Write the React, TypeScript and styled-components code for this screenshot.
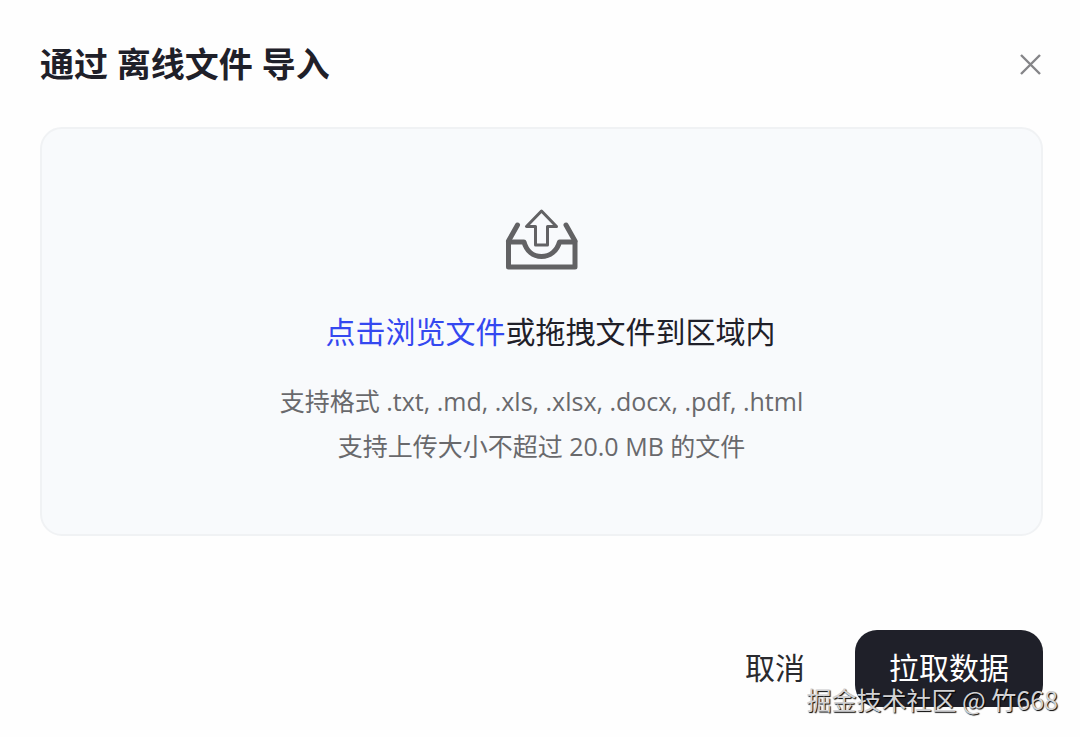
import React, { useRef } from "react";
import styled, { createGlobalStyle } from "styled-components";

const GlobalStyle = createGlobalStyle`
  *, *::before, *::after { box-sizing: border-box; }
  body {
    margin: 0;
    background: #fefefe;
    color: #1f2029;
    font-family: "Open Sans", "Noto Sans CJK SC", sans-serif;
  }
  button { font-family: inherit; cursor: pointer; }
`;

const Dialog = styled.main`
  position: relative;
  display: flex;
  flex-direction: column;
  padding: 40px 37px 30px 40px;
`;

const Header = styled.header`
  display: flex;
  align-items: center;
  justify-content: space-between;
  height: 48px;
`;

const Title = styled.h1`
  margin: 0;
  font-size: 34px;
  line-height: 48px;
  font-weight: 700;
`;

const CloseButton = styled.button`
  display: flex;
  padding: 0;
  border: 0;
  background: none;
  color: #858588;
`;

const DropZone = styled.section`
  display: flex;
  flex-direction: column;
  align-items: center;
  margin-top: 39px;
  padding: 80px 24px 65px;
  border: 2px solid #f0f2f4;
  border-radius: 22px;
  background: #f8fafc;
`;

const Prompt = styled.p`
  margin: 37px 0 23px;
  padding-left: 18px;
  font-size: 30px;
  line-height: 48px;
`;

const BrowseButton = styled.button`
  padding: 0;
  border: 0;
  background: none;
  color: #3448f0;
  font-size: inherit;
  line-height: inherit;
`;

const Hint = styled.p`
  margin: 0;
  color: #69696c;
  font-size: 25px;
  line-height: 45px;
  text-align: center;
`;

const Footer = styled.footer`
  display: flex;
  justify-content: flex-end;
  gap: 16px;
  margin-top: 94px;
`;

const ActionButton = styled.button<{ $primary?: boolean }>`
  height: 77px;
  padding: 0 34px 2px;
  border: 0;
  border-radius: 22px;
  background: ${(p) => (p.$primary ? "#1f2029" : "transparent")};
  color: ${(p) => (p.$primary ? "#ffffff" : "#2a2a2e")};
  font-size: 30px;
  line-height: 48px;
`;

const Watermark = styled.span`
  position: absolute;
  right: 22px;
  bottom: 20px;
  color: #d2d2d4;
  font-family: "Noto Sans CJK SC", sans-serif;
  font-size: 25px;
  line-height: 36px;
  text-shadow: 1px 1px 1px #000000;
  pointer-events: none;
`;

function UploadIcon() {
  return (
    <svg width="74" height="62" viewBox="0 0 74 62" fill="none" stroke="#626264" aria-hidden="true">
      <path
        d="M3.500 33H19C21.500 42 28 47.500 36.500 47.500S52 42 54.500 33H70V58H3.500Z"
        strokeWidth="5"
        strokeLinejoin="round"
      />
      <path d="M3.500 32L12.500 16M70 32L61 16" strokeWidth="5" strokeLinecap="round" />
      <path
        d="M36.500 2L21.500 17.500H30.500V36H42.500V17.500H51.500Z"
        strokeWidth="3"
        strokeLinejoin="round"
      />
    </svg>
  );
}

export default function App() {
  const fileInput = useRef<HTMLInputElement>(null);
  return (
    <>
      <GlobalStyle />
      <Dialog>
        <Header>
          <Title>通过 离线文件 导入</Title>
          <CloseButton type="button" aria-label="关闭">
            <svg width="25" height="25" viewBox="0 0 25 25" stroke="currentColor" strokeWidth="2.4" aria-hidden="true">
              <path d="M3 3L22 22M22 3L3 22" />
            </svg>
          </CloseButton>
        </Header>
        <DropZone>
          <UploadIcon />
          <input ref={fileInput} type="file" accept=".txt,.md,.xls,.xlsx,.docx,.pdf,.html" aria-label="文件" hidden />
          <Prompt>
            <BrowseButton type="button" onClick={() => fileInput.current?.click()}>
              点击浏览文件
            </BrowseButton>
            或拖拽文件到区域内
          </Prompt>
          <Hint>支持格式 .txt, .md, .xls, .xlsx, .docx, .pdf, .html</Hint>
          <Hint>支持上传大小不超过 20.0 MB 的文件</Hint>
        </DropZone>
        <Footer>
          <ActionButton type="button">取消</ActionButton>
          <ActionButton type="button" $primary>
            拉取数据
          </ActionButton>
        </Footer>
        <Watermark>掘金技术社区 @ 竹668</Watermark>
      </Dialog>
    </>
  );
}
